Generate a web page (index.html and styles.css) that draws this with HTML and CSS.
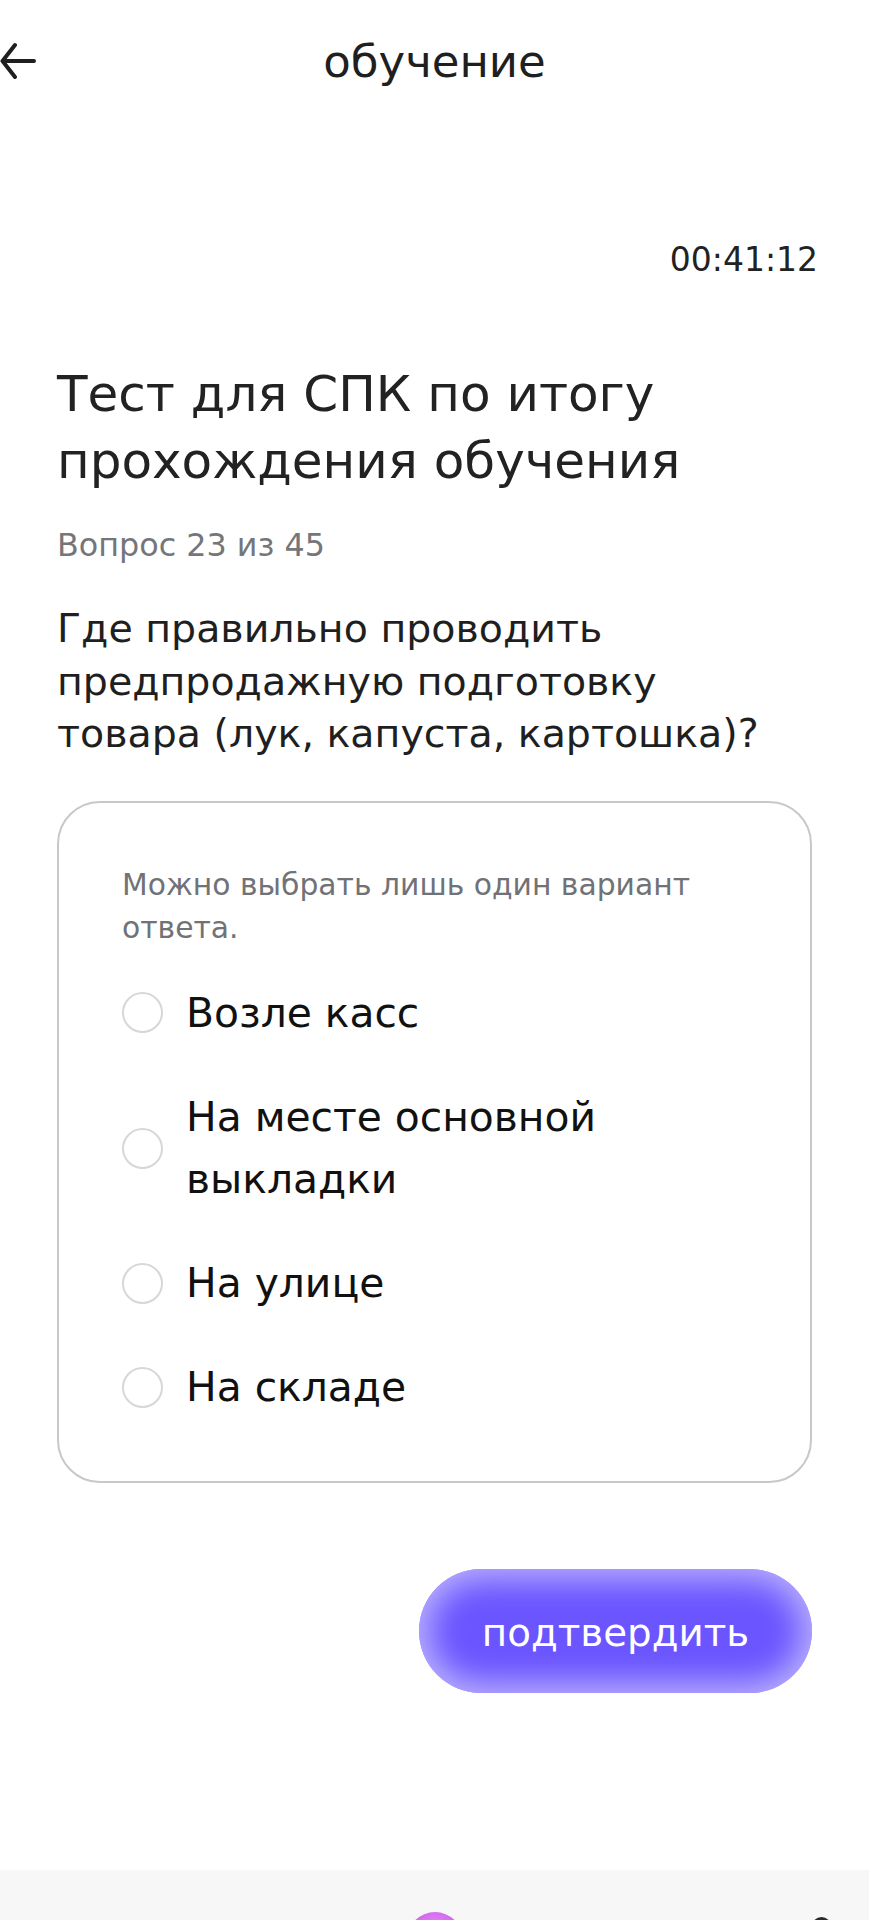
FILE: index.html
```html
<!DOCTYPE html>
<html lang="ru">
<head>
<meta charset="utf-8">
<title>обучение</title>
<link rel="stylesheet" href="styles.css">
</head>
<body>
<div class="screen">
  <header class="topbar">
    <button class="back" aria-label="Назад">
      <svg width="40" height="40" viewBox="0 0 40 40" fill="none" stroke="#1f1f1f" stroke-width="4" stroke-linecap="round" stroke-linejoin="round">
        <path d="M2.5 20 H34 M2.5 20 L15 4 M2.5 20 L15 36"/>
      </svg>
    </button>
    <div class="topbar-title">обучение</div>
    <div></div>
  </header>

  <main class="content">
    <div class="timer-row"><span class="timer">00:41:12</span></div>
    <h1 class="test-title">Тест для СПК по итогу прохождения обучения</h1>
    <div class="meta">Вопрос 23 из 45</div>
    <p class="question">Где правильно проводить предпродажную подготовку товара (лук, капуста, картошка)?</p>

    <section class="card">
      <div class="hint">Можно выбрать лишь один вариант ответа.</div>
      <ul class="options">
        <li class="option"><span class="radio"></span><span class="option-text">Возле касс</span></li>
        <li class="option"><span class="radio"></span><span class="option-text">На месте основной выкладки</span></li>
        <li class="option"><span class="radio"></span><span class="option-text">На улице</span></li>
        <li class="option"><span class="radio"></span><span class="option-text">На складе</span></li>
      </ul>
    </section>

    <div class="actions">
      <button class="confirm">подтвердить</button>
    </div>
  </main>

  <nav class="tabbar">
    <div></div>
    <div class="tab-main"></div>
    <div class="tab-right"><span class="tab-icon"></span></div>
  </nav>
</div>
</body>
</html>
```

FILE: styles.css
```css
* { box-sizing: border-box; }

html, body {
  margin: 0;
  padding: 0;
  background: #ffffff;
}

body {
  font-family: "DejaVu Sans", "Noto Sans", sans-serif;
  color: #1f1f1f;
}

.screen {
  height: 1920px;
  display: flex;
  flex-direction: column;
  overflow: hidden;
}

.topbar {
  height: 122px;
  display: grid;
  grid-template-columns: 1fr auto 1fr;
  align-items: center;
}

.back {
  justify-self: start;
  width: 40px;
  height: 40px;
  padding: 0;
  margin: 0;
  border: 0;
  background: none;
  display: flex;
}

.topbar-title {
  font-size: 45px;
  line-height: 45px;
  color: #1f1f1f;
}

.content {
  padding: 0 57px;
  display: flex;
  flex-direction: column;
}

.timer-row {
  margin-top: 118px;
  margin-right: -6px;
  display: flex;
  justify-content: flex-end;
}

.timer {
  font-size: 33px;
  line-height: 40px;
  color: #222222;
}

.test-title {
  margin: 81px 0 0;
  font-size: 50px;
  line-height: 67px;
  font-weight: 400;
  color: #222222;
}

.meta {
  margin-top: 30px;
  font-size: 31.8px;
  line-height: 40px;
  color: #75767a;
}

.question {
  margin: 37px 0 0;
  max-width: 710px;
  font-size: 39.5px;
  line-height: 52.5px;
  color: #1f1f1f;
}

.card {
  margin-top: 41px;
  border: 2px solid #c8c8cb;
  border-radius: 43px;
  padding: 60px 60px 62px 63px;
}

.hint {
  font-size: 29.8px;
  line-height: 43px;
  color: #717276;
  margin-bottom: 33px;
}

.options {
  list-style: none;
  margin: 0;
  padding: 0;
  display: flex;
  flex-direction: column;
  gap: 41.5px;
}

.option {
  display: flex;
  align-items: center;
  gap: 23px;
}

.radio {
  flex: 0 0 41px;
  width: 41px;
  height: 41px;
  border: 2px solid #d7d7d9;
  border-radius: 50%;
  background: #ffffff;
}

.option-text {
  font-size: 40.8px;
  line-height: 62.5px;
  color: #111111;
}

.actions {
  margin-top: 86px;
  display: flex;
  justify-content: flex-end;
}

.confirm {
  width: 393px;
  height: 124px;
  border: 0;
  border-radius: 62px;
  background: #6a55ff;
  box-shadow: inset 0 0 32px 10px rgba(196, 188, 255, 0.9);
  color: #ffffff;
  font-family: "DejaVu Sans", "Noto Sans", sans-serif;
  font-size: 38.8px;
  line-height: 40px;
  padding: 4px 0 0;
}

.tabbar {
  margin-top: auto;
  height: 50px;
  background: #f7f7f8;
  display: grid;
  grid-template-columns: 1fr 56px 1fr;
  overflow: hidden;
}

.tab-main {
  margin-top: 42px;
  width: 56px;
  height: 56px;
  border-radius: 50%;
  background: radial-gradient(circle at 50% 30%, #e88af5 0%, #c65ae8 60%, #a748de 100%);
}

.tab-right {
  display: flex;
  justify-content: flex-end;
  padding-right: 38px;
}

.tab-icon {
  margin-top: 47px;
  width: 19px;
  height: 19px;
  border-radius: 50%;
  background: #2a2a2a;
}
```
